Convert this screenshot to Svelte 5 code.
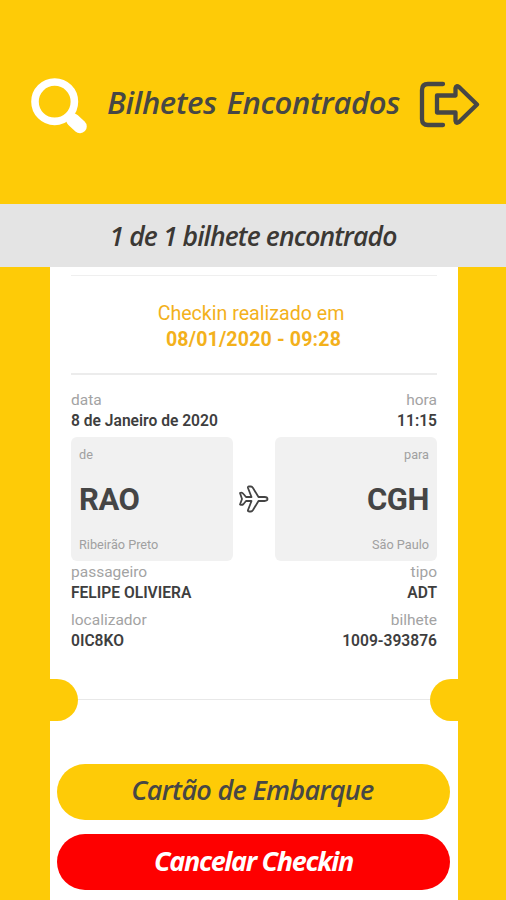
<script>
    const ticket = {
        checkin: '08/01/2020 - 09:28',
        date: '8 de Janeiro de 2020',
        time: '11:15',
        passenger: 'FELIPE OLIVIERA',
        type: 'ADT',
        locator: '0IC8KO',
        number: '1009-393876'
    };

    const from = { label: 'de', code: 'RAO', city: 'Ribeirão Preto' };
    const to = { label: 'para', code: 'CGH', city: 'São Paulo' };
</script>

{#snippet row(leftLabel, left, rightLabel, right)}
    <div class="row">
        <div class="field">
            <span class="label">{leftLabel}</span>
            <span class="value">{left}</span>
        </div>
        <div class="field end">
            <span class="label">{rightLabel}</span>
            <span class="value">{right}</span>
        </div>
    </div>
{/snippet}

{#snippet airport(place, end)}
    <div class="airport" class:end>
        <span class="small">{place.label}</span>
        <span class="code">{place.code}</span>
        <span class="small">{place.city}</span>
    </div>
{/snippet}

<main>
    <header>
        <svg class="search" width="58" height="58" viewBox="0 0 58 58">
            <circle cx="24.7" cy="24.7" r="19.7" fill="none" stroke="#fff" stroke-width="7.6" />
            <path d="M37 37 L43 42" stroke="#fff" stroke-width="7" />
            <path d="M43 43 L50 49.5" stroke="#fff" stroke-width="13.5" stroke-linecap="round" />
        </svg>
        <h1>Bilhetes Encontrados</h1>
        <svg class="logout" width="62" height="50" viewBox="0 0 62 50">
            <path d="M25 4 H10 Q4 4 4 10 V39 Q4 45 10 45 H25" />
            <path d="M19 15.5 H37.5 V8 Q38 5 41 7 L59 24.5 L41 42 Q38 44 37.5 41 V32.5 H19 Z" />
        </svg>
    </header>

    <div class="summary">1 de 1 bilhete encontrado</div>

    <section class="ticket">
        <div class="details">
            <div class="checkin">
                <span>Checkin realizado em</span>
                <strong>{ticket.checkin}</strong>
            </div>
            {@render row('data', ticket.date, 'hora', ticket.time)}
            <div class="route">
                {@render airport(from, false)}
                <svg width="34" height="30" viewBox="0 0 34 30">
                    <path d="M3 9 Q5 8 6.5 10 L9 13 H14.5 L11 4 Q10.5 2.5 12 2.5 H14 Q15 2.5 16 4 L21.5 13 H27.5 Q30.5 13.2 30.5 15 Q30.5 16.8 27.5 17 H21.5 L16 26 Q15 27.5 14 27.5 H12 Q10.5 27.5 11 26 L14.5 17 H9 L6.5 20 Q5 21.5 3 20.5 L5 15 Z" />
                </svg>
                {@render airport(to, true)}
            </div>
            {@render row('passageiro', ticket.passenger, 'tipo', ticket.type)}
            {@render row('localizador', ticket.locator, 'bilhete', ticket.number)}
        </div>

        <div class="tear">
            <i class="notch left"></i>
            <hr />
            <i class="notch right"></i>
        </div>

        <div class="actions">
            <button class="board">Cartão de Embarque</button>
            <button class="cancel">Cancelar Checkin</button>
        </div>
    </section>
</main>

<style>
    :global(body) {
        background: #fecb07;
    }
    main {
        height: 900px;
        overflow: hidden;
        display: flex;
        flex-direction: column;
        background: #fecb07;
        font-family: Roboto, sans-serif;
        color: #3e3e3e;
    }
    header {
        height: 204px;
        flex: none;
        display: flex;
        align-items: center;
        box-sizing: border-box;
        padding: 6px 25px 0 30px;
    }
    .search {
        flex: none;
        margin-top: 2px;
    }
    h1, .summary, button {
        font-family: "Open Sans", sans-serif;
        font-style: italic;
        font-weight: 600;
        white-space: nowrap;
    }
    h1 {
        width: 292px;
        margin: -6px 0 0 19px;
        font-size: 31px;
        letter-spacing: -0.35px;
        word-spacing: 2px;
        color: #474745;
    }
    .logout {
        flex: none;
        margin: -1px 0 0 19px;
    }
    .logout path {
        fill: none;
        stroke: #474745;
        stroke-width: 4.3;
        stroke-linecap: round;
        stroke-linejoin: round;
    }
    .summary {
        height: 63px;
        flex: none;
        line-height: 64px;
        background: #e4e4e4;
        text-align: center;
        font-size: 26.5px;
        letter-spacing: -0.9px;
        color: #3b3834;
    }
    .ticket {
        width: 408px;
        height: 633px;
        margin-left: 50px;
        background: #fff;
    }
    .details {
        padding: 8px 21px 0;
        height: 404px;
    }
    .checkin {
        height: 100px;
        border-top: 1px solid #efefef;
        border-bottom: 2px solid #ececec;
        display: flex;
        flex-direction: column;
        align-items: center;
        box-sizing: border-box;
        padding: 25px 6px 0 0;
        font-size: 19.6px;
        line-height: 26px;
        color: #f3b11c;
    }
    .checkin strong {
        padding-left: 5px;
        letter-spacing: 0.15px;
    }
    .row {
        display: flex;
        justify-content: space-between;
        height: 48px;
    }
    .checkin + .row {
        padding-top: 15px;
        height: 47px;
    }
    .route ~ .row {
        padding-top: 1px;
        height: 47px;
    }
    .field {
        display: flex;
        flex-direction: column;
    }
    .end {
        align-items: flex-end;
        text-align: right;
    }
    .label {
        font-size: 15.5px;
        line-height: 21px;
        color: #a3a3a3;
    }
    .value {
        font-size: 15.6px;
        line-height: 20px;
        font-weight: 600;
    }
    .route {
        display: flex;
        align-items: center;
        justify-content: space-between;
        height: 124px;
    }
    .route svg {
        margin-right: 1px;
        fill: none;
        stroke: #444;
        stroke-width: 1.8;
        stroke-linejoin: round;
    }
    .airport {
        width: 162px;
        height: 124px;
        box-sizing: border-box;
        padding: 10px 8px 8px;
        border-radius: 6px;
        background: #f1f1f1;
        display: flex;
        flex-direction: column;
        justify-content: space-between;
    }
    .small {
        font-size: 12.7px;
        line-height: 16px;
        color: #a0a0a0;
    }
    .code {
        font-size: 31px;
        line-height: 36px;
        font-weight: 700;
        letter-spacing: -0.4px;
        color: #454545;
    }
    .tear {
        display: flex;
        align-items: center;
        height: 42px;
    }
    .notch {
        width: 28px;
        height: 42px;
        background: #fecb07;
    }
    .left {
        border-radius: 0 21px 21px 0;
    }
    .right {
        border-radius: 21px 0 0 21px;
    }
    hr {
        flex: 1;
        margin: 0 0 1px;
        border: 0;
        border-top: 1px solid #e8e8e8;
    }
    .actions {
        display: flex;
        flex-direction: column;
        gap: 14px;
        padding: 43px 8px 0 7px;
    }
    button {
        height: 56px;
        border: 0;
        border-radius: 28px;
        padding: 0 0 4px;
        font-size: 27px;
        letter-spacing: -1.3px;
    }
    .board {
        padding: 0 2px 6px 0;
        background: #fecb07;
        color: #474745;
        letter-spacing: -0.7px;
    }
    .cancel {
        background: #fe0000;
        color: #fff;
        font-weight: 700;
    }
</style>
